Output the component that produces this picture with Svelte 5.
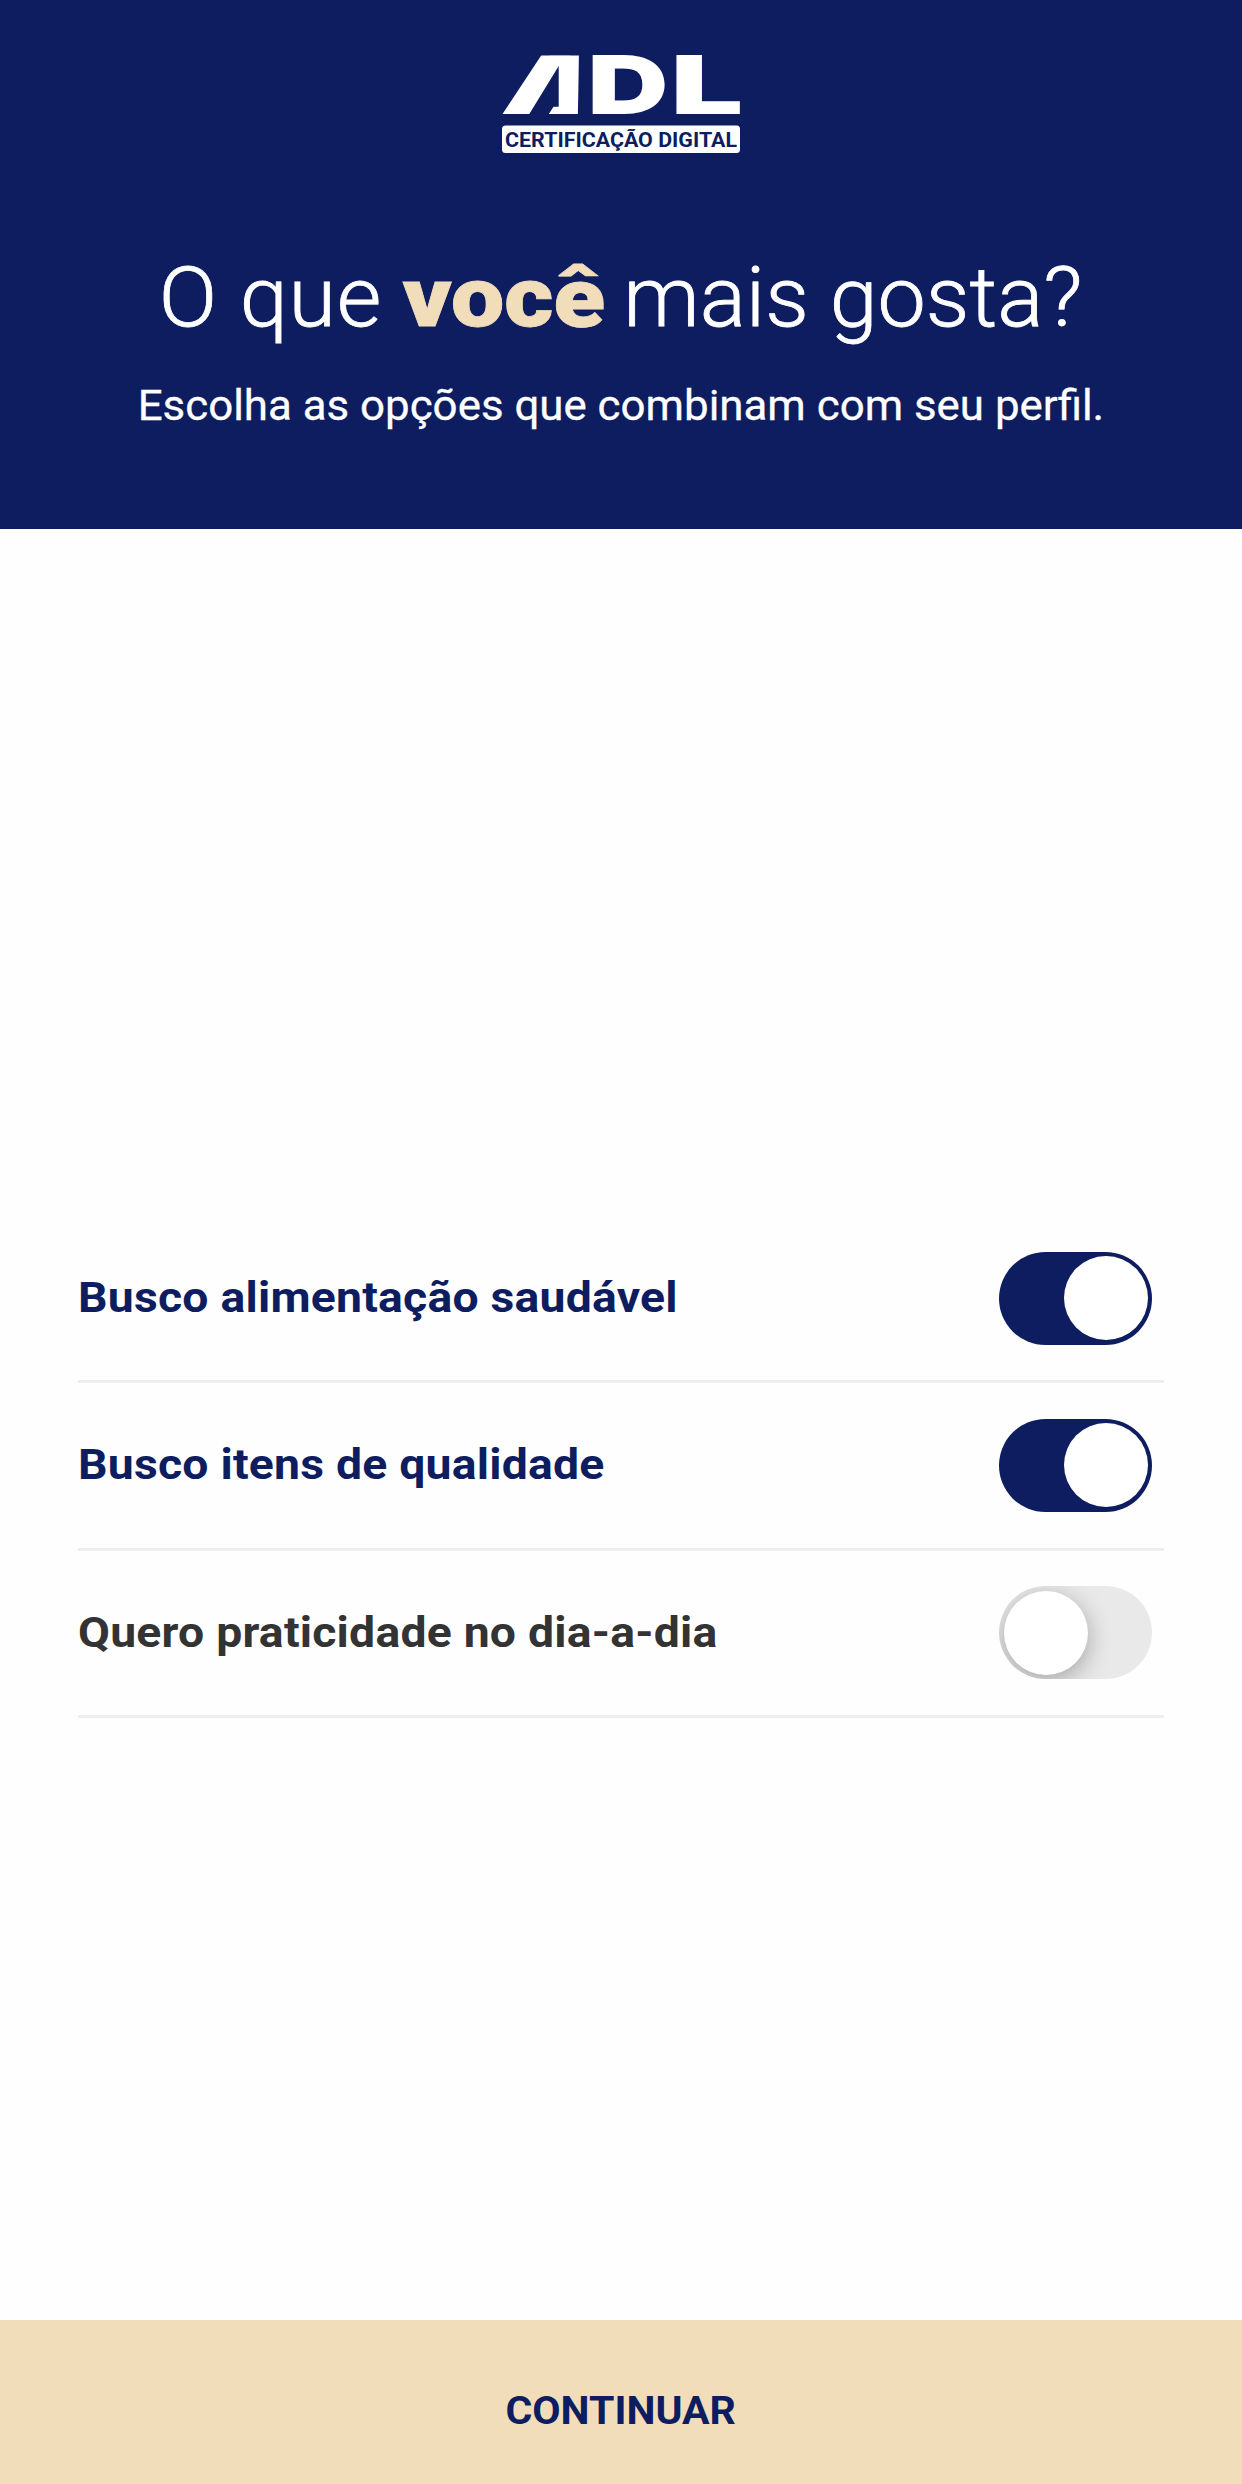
<script lang="ts">
  /**
   * Preferences screen: the user toggles the options that fit their profile
   * and moves on with the footer button.
   */

  interface Option {
    id: string;
    label: string;
    active: boolean;
  }

  let options: Option[] = $state([
    { id: 'saudavel', label: 'Busco alimentação saudável', active: true },
    { id: 'qualidade', label: 'Busco itens de qualidade', active: true },
    { id: 'praticidade', label: 'Quero praticidade no dia-a-dia', active: false }
  ]);
</script>

<div class="screen">
  <header>
    <svg class="logo" viewBox="0 0 238 98" role="img" aria-label="ADL Certificação Digital">
      <clipPath id="brand-clip">
        <rect x="0" y="0.5" width="79.5" height="58.5" />
      </clipPath>
      <g class="brand">
        <g clip-path="url(#brand-clip)">
          <text class="heavy" transform="translate(7 59) skewX(-19) scale(0.975 1)">A</text>
        </g>
        <text transform="translate(85.5 59) scale(1.39 1)">D</text>
        <text transform="translate(168.6 59) scale(1.6 1)">L</text>
      </g>
      <path class="cut" d="M56.7 11V51.7H51.5L46.5 59.5H27Z" />
      <rect y="70.5" width="238" height="27.5" rx="3.5" fill="#fff" />
      <text class="tagline" x="3" y="92" textLength="232" lengthAdjust="spacingAndGlyphs">CERTIFICAÇÃO DIGITAL</text>
    </svg>
    <h1><span>O que</span> <strong>você</strong> mais gosta?</h1>
    <p>Escolha as opções que combinam com seu perfil.</p>
  </header>

  <main>
    <ul>
      {#each options as option (option.id)}
        <li class:active={option.active}>
          <span class="label">{option.label}</span>
          <button
            class="toggle"
            role="switch"
            aria-checked={option.active}
            aria-label={option.label}
            onclick={() => (option.active = !option.active)}
          >
            <span class="knob"></span>
          </button>
        </li>
      {/each}
    </ul>
  </main>

  <button class="continue"><span>CONTINUAR</span></button>
</div>

<style>
  :global(body) {
    margin: 0;
  }

  .screen {
    --navy: #0d1d60;
    --sand: #f2ddba;
    display: flex;
    flex-direction: column;
    height: 2484px;
    background: #fefefe;
    font-family: Roboto, 'Liberation Sans', sans-serif;
  }

  header {
    display: flex;
    flex-direction: column;
    align-items: center;
    box-sizing: border-box;
    height: 529px;
    padding-top: 55px;
    background: var(--navy);
    color: #fff;
    white-space: nowrap;
  }

  .logo {
    width: 238px;
    height: 98px;
    overflow: visible;
  }

  .brand {
    font-family: Inter, sans-serif;
    font-weight: 900;
    font-size: 80.5px;
    fill: #fff;
  }

  .heavy {
    stroke: #fff;
    stroke-width: 16px;
  }

  .cut {
    fill: var(--navy);
  }

  .tagline {
    font-weight: 700;
    font-size: 20.5px;
    fill: var(--navy);
  }

  h1 {
    margin: 95px 0 0;
    font-size: 84px;
    font-weight: 300;
    line-height: 100px;
    transform: scaleX(1.025);
    -webkit-text-stroke: 0.8px currentColor;
  }

  h1 span {
    letter-spacing: 0.8px;
  }

  h1 strong {
    display: inline-block;
    margin: 0 6px 0 9px;
    color: var(--sand);
    font-weight: 900;
    transform: scaleX(1.1);
  }

  p {
    margin: 33px 0 0;
    font-size: 42px;
    line-height: 50px;
    transform: scaleX(1.044);
    -webkit-text-stroke: 0.3px currentColor;
  }

  main {
    flex: 1;
    display: flex;
    flex-direction: column;
    justify-content: center;
    padding: 85px 78px 0;
  }

  ul {
    margin: 0;
    padding: 0;
    list-style: none;
  }

  li {
    display: flex;
    align-items: center;
    justify-content: space-between;
    height: 164.3px;
    padding-right: 12px;
    border-bottom: 3px solid #eee;
    color: #333;
  }

  li.active {
    color: var(--navy);
  }

  .label {
    font-size: 42px;
    font-weight: 700;
    line-height: 50px;
    letter-spacing: 0.2px;
    transform: scaleX(1.103);
    transform-origin: left;
  }

  button {
    border: none;
    padding: 0;
    font-family: inherit;
    cursor: pointer;
  }

  .toggle {
    display: flex;
    align-items: center;
    box-sizing: border-box;
    width: 153px;
    height: 93px;
    padding: 0 4.5px;
    border-radius: 47px;
    background: #e9e9e9;
    overflow: hidden;
  }

  .active .toggle {
    justify-content: flex-end;
    background: var(--navy);
  }

  .knob {
    width: 84px;
    height: 84px;
    border-radius: 50%;
    background: #fff;
    box-shadow: 0 6px 24px rgba(0, 0, 0, 0.3);
  }

  .active .knob {
    box-shadow: none;
  }

  .continue {
    height: 164px;
    padding-top: 17px;
    background: var(--sand);
    color: var(--navy);
    font-size: 38px;
    font-weight: 700;
  }

  .continue span {
    display: inline-block;
    transform: scaleX(1.08);
  }
</style>
